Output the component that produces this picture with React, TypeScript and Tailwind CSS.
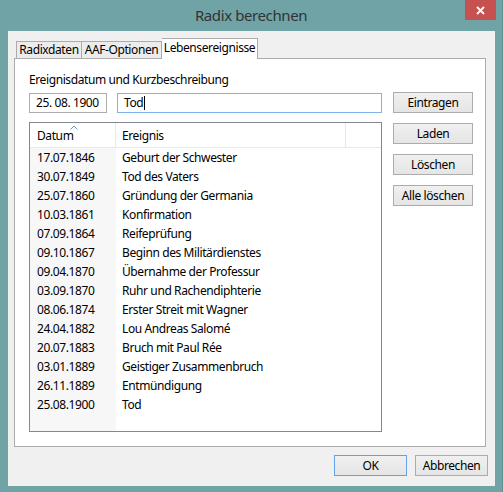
import React from 'react';

const events: [string, string][] = [
  ['17.07.1846', 'Geburt der Schwester'],
  ['30.07.1849', 'Tod des Vaters'],
  ['25.07.1860', 'Gründung der Germania'],
  ['10.03.1861', 'Konfirmation'],
  ['07.09.1864', 'Reifeprüfung'],
  ['09.10.1867', 'Beginn des Militärdienstes'],
  ['09.04.1870', 'Übernahme der Professur'],
  ['03.09.1870', 'Ruhr und Rachendiphterie'],
  ['08.06.1874', 'Erster Streit mit Wagner'],
  ['24.04.1882', 'Lou Andreas Salomé'],
  ['20.07.1883', 'Bruch mit Paul Rée'],
  ['03.01.1889', 'Geistiger Zusammenbruch'],
  ['26.11.1889', 'Entmündigung'],
  ['25.08.1900', 'Tod'],
];

const font = { fontFamily: '"Segoe UI", "Noto Sans", "Open Sans", sans-serif' };

function Button({ label, focused, className = '' }: { label: string; focused?: boolean; className?: string }) {
  return (
    <div
      className={`flex items-center justify-center h-[21px] border bg-gradient-to-b from-[#f0f0f0] to-[#e5e5e5] text-[12px] text-black whitespace-nowrap ${
        focused ? 'border-[#5fa3e8]' : 'border-[#acacac]'
      } ${className}`}
    >
      {label}
    </div>
  );
}

export default function App() {
  return (
    <div
      className="w-[503px] h-[492px] bg-[#6fa3a5] flex flex-col border-r border-[#5f9193] tracking-[-0.4px]"
      style={font}
    >
      {/* Titelleiste */}
      <div className="relative h-[31px] flex items-center justify-center shrink-0">
        <span className="text-[15px] text-[#333] pb-[1px]">Radix berechnen</span>
        <div className="absolute right-[6px] top-0 w-[31px] h-[20px] bg-[#c75050] flex items-center justify-center">
          <svg width="9" height="9" viewBox="0 0 9 9">
            <path d="M1 1 L8 8 M8 1 L1 8" stroke="white" strokeWidth="1.8" />
          </svg>
        </div>
      </div>

      {/* Client-Bereich */}
      <div className="mx-[8px] w-[487px] h-[455px] bg-[#f0f0f0] flex flex-col">
        {/* Tabs */}
        <div className="flex items-end h-[27px] pl-[8px] shrink-0 whitespace-nowrap">
          <div className="h-[17px] flex items-center border border-b-0 border-[#acacac] bg-[#ececec] text-[12px] w-[66px] justify-center">
            Radixdaten
          </div>
          <div className="h-[17px] flex items-center border border-b-0 border-l-0 border-[#acacac] bg-[#ececec] text-[12px] w-[80px] justify-center">
            AAF-Optionen
          </div>
          <div className="relative z-10 -mb-[1px] h-[21px] flex items-center justify-center border border-b-0 border-l-0 border-[#acacac] bg-white text-[12px] w-[96px] pb-[2px]">
            Lebensereignisse
          </div>
        </div>

        {/* Panel */}
        <div className="ml-[6px] w-[472px] h-[389px] border border-[#acacac] bg-white flex gap-[11px] pl-[14px] shrink-0">
          <div className="flex flex-col w-[353px]">
            <div className="mt-[13px] h-[15px] leading-[15px] text-[12px] text-black">Ereignisdatum und Kurzbeschreibung</div>
            <div className="mt-[6px] flex gap-[10px]">
              <div className="w-[78px] h-[20px] border border-[#acacac] flex items-center pl-[6px] text-[12px]">25. 08. 1900</div>
              <div className="w-[265px] h-[20px] border border-[#7eb4ea] flex items-center pl-[6px] text-[12px]">
                Tod<span className="inline-block w-[1px] h-[14px] bg-black ml-[1px]" />
              </div>
            </div>
            <div className="mt-[9px] h-[310px] border border-[#828790] flex flex-col overflow-hidden relative">
              <div className="flex h-[25px] border-b border-[#e5eaf2] shrink-0 text-[12px] text-black">
                <div className="relative w-[86px] border-r border-[#e5eaf2] flex items-center pl-[7px] pt-[2px]">
                  Datum
                  <svg className="absolute left-[40px] top-[2px]" width="8" height="5" viewBox="0 0 8 5">
                    <path d="M0.5 4.5 L4 1 L7.5 4.5" fill="none" stroke="#5b9bd5" strokeWidth="1" />
                  </svg>
                </div>
                <div className="w-[230px] border-r border-[#e5eaf2] flex items-center pl-[6px] pt-[2px]">Ereignis</div>
                <div className="flex-1" />
              </div>
              <div className="flex flex-1">
                <div className="w-[86px] bg-[#f7f7f7] flex flex-col">
                  {events.map(([d]) => (
                    <div key={d} className="h-[19px] flex items-center pl-[7px] text-[12px] text-black">
                      {d}
                    </div>
                  ))}
                </div>
                <div className="flex-1 flex flex-col">
                  {events.map(([d, e]) => (
                    <div key={d} className="h-[19px] flex items-center pl-[6px] text-[12px] text-black">
                      {e}
                    </div>
                  ))}
                </div>
              </div>
            </div>
          </div>
          <div className="flex flex-col gap-[10px] pt-[33px] w-[80px]">
            <Button label="Eintragen" />
            <Button label="Laden" />
            <Button label="Löschen" />
            <Button label="Alle löschen" />
          </div>
        </div>

        {/* Dialog-Buttons */}
        <div className="flex justify-end gap-[8px] pr-[7px] mt-[8px]">
          <Button label="OK" focused className="w-[73px]" />
          <Button label="Abbrechen" className="w-[73px]" />
        </div>
      </div>
    </div>
  );
}
